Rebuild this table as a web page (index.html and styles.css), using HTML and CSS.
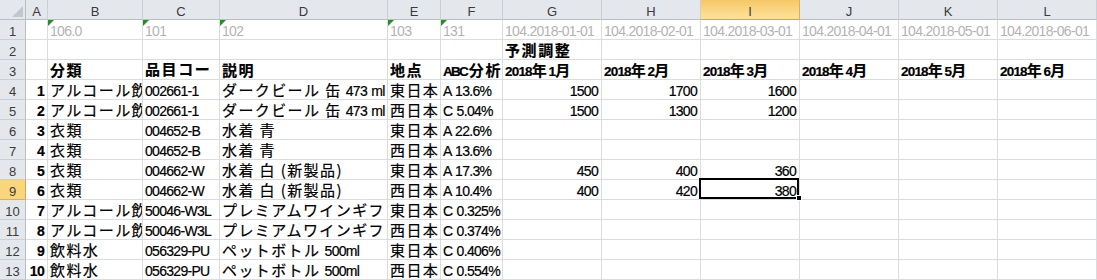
FILE: index.html
```html
<!DOCTYPE html>
<html lang="ja">
<head>
<meta charset="utf-8">
<title>Sheet</title>
<link rel="stylesheet" href="styles.css">
</head>
<body>
<div class="sheet">
  <div class="corner"></div>
  <div class="ch">A</div><div class="ch">B</div><div class="ch">C</div><div class="ch">D</div><div class="ch">E</div><div class="ch">F</div><div class="ch">G</div><div class="ch">H</div><div class="ch hsel">I</div><div class="ch">J</div><div class="ch">K</div><div class="ch">L</div>

  <div class="rh">1</div>
  <div></div>
  <div class="g tri">106.0</div><div class="g tri">101</div><div class="g tri">102</div><div class="g tri">103</div><div class="g tri">131</div>
  <div class="g">104.2018-01-01</div><div class="g">104.2018-02-01</div><div class="g">104.2018-03-01</div><div class="g">104.2018-04-01</div><div class="g">104.2018-05-01</div><div class="g">104.2018-06-01</div>

  <div class="rh">2</div>
  <div></div><div></div><div></div><div></div><div></div><div></div>
  <div class="hd"><span class="j">予測調整</span></div>
  <div></div><div></div><div></div><div></div><div></div>

  <div class="rh">3</div>
  <div></div>
  <div class="hd"><span class="j">分類</span></div>
  <div class="hd narrow"><span class="j">品目コード</span></div>
  <div class="hd"><span class="j">説明</span></div>
  <div class="hd"><span class="j">地点</span></div>
  <div class="hd"><span class="abc">ABC</span><span class="j">分析</span></div>
  <div class="hd">2018<span class="j">年</span>1<span class="j">月</span></div>
  <div class="hd">2018<span class="j">年</span>2<span class="j">月</span></div>
  <div class="hd">2018<span class="j">年</span>3<span class="j">月</span></div>
  <div class="hd">2018<span class="j">年</span>4<span class="j">月</span></div>
  <div class="hd">2018<span class="j">年</span>5<span class="j">月</span></div>
  <div class="hd">2018<span class="j">年</span>6<span class="j">月</span></div>

  <div class="rh">4</div>
  <div class="idx">1</div>
  <div><span class="j">アルコール飲料</span></div>
  <div>002661-1</div>
  <div><span class="j">ダークビール 缶</span> 473 ml</div>
  <div><span class="j">東日本</span></div>
  <div>A 13.6%</div>
  <div class="num">1500</div><div class="num">1700</div><div class="num">1600</div><div></div><div></div><div></div>

  <div class="rh">5</div>
  <div class="idx">2</div>
  <div><span class="j">アルコール飲料</span></div>
  <div>002661-1</div>
  <div><span class="j">ダークビール 缶</span> 473 ml</div>
  <div><span class="j">西日本</span></div>
  <div>C 5.04%</div>
  <div class="num">1500</div><div class="num">1300</div><div class="num">1200</div><div></div><div></div><div></div>

  <div class="rh">6</div>
  <div class="idx">3</div>
  <div><span class="j">衣類</span></div>
  <div>004652-B</div>
  <div><span class="j">水着 青</span></div>
  <div><span class="j">東日本</span></div>
  <div>A 22.6%</div>
  <div></div><div></div><div></div><div></div><div></div><div></div>

  <div class="rh">7</div>
  <div class="idx">4</div>
  <div><span class="j">衣類</span></div>
  <div>004652-B</div>
  <div><span class="j">水着 青</span></div>
  <div><span class="j">西日本</span></div>
  <div>A 13.6%</div>
  <div></div><div></div><div></div><div></div><div></div><div></div>

  <div class="rh">8</div>
  <div class="idx">5</div>
  <div><span class="j">衣類</span></div>
  <div>004662-W</div>
  <div><span class="j">水着 白 (新製品)</span></div>
  <div><span class="j">東日本</span></div>
  <div>A 17.3%</div>
  <div class="num">450</div><div class="num">400</div><div class="num">360</div><div></div><div></div><div></div>

  <div class="rh rsel">9</div>
  <div class="idx">6</div>
  <div><span class="j">衣類</span></div>
  <div>004662-W</div>
  <div><span class="j">水着 白 (新製品)</span></div>
  <div><span class="j">西日本</span></div>
  <div>A 10.4%</div>
  <div class="num">400</div><div class="num">420</div><div class="num sel">380</div><div></div><div></div><div></div>

  <div class="rh">10</div>
  <div class="idx">7</div>
  <div><span class="j">アルコール飲料</span></div>
  <div>50046-W3L</div>
  <div><span class="j">プレミアムワインギフト</span></div>
  <div><span class="j">東日本</span></div>
  <div>C 0.325%</div>
  <div></div><div></div><div></div><div></div><div></div><div></div>

  <div class="rh">11</div>
  <div class="idx">8</div>
  <div><span class="j">アルコール飲料</span></div>
  <div>50046-W3L</div>
  <div><span class="j">プレミアムワインギフト</span></div>
  <div><span class="j">西日本</span></div>
  <div>C 0.374%</div>
  <div></div><div></div><div></div><div></div><div></div><div></div>

  <div class="rh">12</div>
  <div class="idx">9</div>
  <div><span class="j">飲料水</span></div>
  <div>056329-PU</div>
  <div><span class="j">ペットボトル</span> 500ml</div>
  <div><span class="j">東日本</span></div>
  <div>C 0.406%</div>
  <div></div><div></div><div></div><div></div><div></div><div></div>

  <div class="rh">13</div>
  <div class="idx">10</div>
  <div><span class="j">飲料水</span></div>
  <div>056329-PU</div>
  <div><span class="j">ペットボトル</span> 500ml</div>
  <div><span class="j">西日本</span></div>
  <div>C 0.554%</div>
  <div></div><div></div><div></div><div></div><div></div><div></div>
</div>
</body>
</html>
```

FILE: styles.css
```css
html, body {
  margin: 0;
  padding: 0;
  background: #ffffff;
}

.sheet {
  display: grid;
  grid-template-columns: 26px 22px 95px 77px 168px 53px 62px repeat(6, 99px);
  grid-auto-rows: 20px;
  font-family: "Liberation Sans", "Noto Sans CJK JP", sans-serif;
  font-size: 14px;
  letter-spacing: -0.7px;
  word-spacing: 1px;
  line-height: 19px;
  color: #000000;
  -webkit-text-stroke: 0.2px currentColor;
}

.sheet > div {
  box-sizing: border-box;
  border-right: 1px solid #dadcdd;
  border-bottom: 1px solid #dadcdd;
  padding: 2px 3px 0 2px;
  white-space: nowrap;
  overflow-x: clip;
  overflow-y: visible;
}

.j {
  font-family: "Noto Sans CJK JP", sans-serif;
  font-size: 15px;
  line-height: 0;
  letter-spacing: 1.4px;
  word-spacing: 0;
}

.sheet .corner {
  position: relative;
  background: #e4e7eb;
  border-right-color: #b8bec6;
  border-bottom-color: #b8bec6;
}

.corner::after {
  content: "";
  position: absolute;
  right: 2px;
  bottom: 2px;
  width: 0;
  height: 0;
  border-left: 11px solid transparent;
  border-bottom: 11px solid #c3c7cd;
}

.sheet .ch {
  background: #e4e7eb;
  color: #3b3b3b;
  text-align: center;
  letter-spacing: 0;
  font-size: 13px;
  padding: 2px 0 0 0;
  border-right-color: #cbcfd5;
  border-bottom-color: #b8bec6;
  -webkit-text-stroke: 0;
}

.sheet .hsel {
  background: linear-gradient(to bottom, #f7c766, #fde39b);
  border-right-color: #e0ad4f;
  border-bottom-color: #e2a33a;
}

.sheet .rh {
  background: #e4e7eb;
  color: #3b3b3b;
  text-align: center;
  letter-spacing: 0;
  font-size: 13px;
  padding: 2px 0 0 0;
  border-right-color: #b8bec6;
  border-bottom-color: #cbcfd5;
  -webkit-text-stroke: 0;
}

.sheet .rsel {
  background: #f9d67c;
  border-right-color: #e2a33a;
  border-bottom-color: #e0ad4f;
}

.sheet .g {
  color: #b3b3b3;
  -webkit-text-stroke: 0;
}

.sheet .tri {
  position: relative;
}

.tri::before {
  content: "";
  position: absolute;
  left: 0;
  top: 0;
  width: 0;
  height: 0;
  border-top: 6px solid #229022;
  border-right: 6px solid transparent;
}

.hd {
  font-weight: 700;
  font-size: 13.5px;
  letter-spacing: -0.8px;
}

.hd .j {
  letter-spacing: 1.6px;
}

.narrow .j {
  display: inline-block;
  width: 67px;
  overflow: hidden;
  vertical-align: baseline;
  line-height: 19px;
  height: 19px;
  margin-top: -3px;
}

.abc {
  letter-spacing: -1.8px;
  margin-right: 2px;
}

.num {
  text-align: right;
}

.idx {
  text-align: right;
  font-weight: 700;
}

.sheet .sel {
  position: relative;
  overflow: visible;
}

.sel::after {
  content: "";
  position: absolute;
  left: -2px;
  top: -2px;
  right: 0;
  bottom: 0;
  border: 2px solid #000000;
}

.sel::before {
  content: "";
  position: absolute;
  right: -3px;
  bottom: -2px;
  width: 4px;
  height: 4px;
  background: #000000;
  border: 1px solid #ffffff;
  z-index: 2;
}
```
